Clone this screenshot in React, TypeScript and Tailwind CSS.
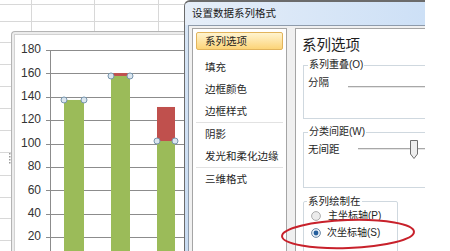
import React from 'react'

// y position (page px) of a value on the chart's axis
const yOf = (v: number) => 260.6 - v * 1.17

const ticks = [180, 160, 140, 120, 100, 80, 60, 40, 20]

const bars = [
  { x: 64, w: 20, green: 137.3, red: 0 },
  { x: 111, w: 19, green: 157.8, red: 160.3 },
  { x: 157, w: 18, green: 102.2, red: 131.3 },
]

const sheetRows = [4, 21, 42, 64, 86, 108, 130, 152, 175, 197, 218, 240]
const sheetCols = [31, 94, 158]

function Chart() {
  return (
    <svg width="169" height="216" viewBox="15 35 169 216" className="block">
      {ticks.map((t) => (
        <g key={t}>
          <line x1="46" x2="184" y1={Math.round(yOf(t)) + 0.5} y2={Math.round(yOf(t)) + 0.5} stroke="#8c8c8c" />
          <text
            x="41"
            y={yOf(t)}
            textAnchor="end"
            dominantBaseline="middle"
            fontSize="12"
            fill="#333"
            fontFamily="Liberation Sans, sans-serif"
          >
            {t}
          </text>
        </g>
      ))}
      <line x1="50.5" x2="50.5" y1="50" y2="251" stroke="#8c8c8c" />
      {bars.map((b) => (
        <g key={b.x}>
          <rect x={b.x} y={yOf(b.green)} width={b.w} height={260 - yOf(b.green)} fill="#9bbb59" />
          {b.red > 0 && (
            <rect x={b.x} y={yOf(b.red)} width={b.w} height={yOf(b.green) - yOf(b.red)} fill="#c0504d" />
          )}
        </g>
      ))}
      {bars.map((b) => (
        <g key={'h' + b.x}>
          <circle cx={b.x} cy={yOf(b.green)} r="3" fill="#dbe6ef" stroke="#7896ae" />
          <circle cx={b.x + b.w} cy={yOf(b.green)} r="3" fill="#dbe6ef" stroke="#7896ae" />
        </g>
      ))}
    </svg>
  )
}

function Sheet() {
  return (
    <div className="relative w-[184px] shrink-0">
      <svg className="absolute inset-0" width="184" height="251">
        {sheetRows.map((y) => (
          <line key={y} x1="0" x2="184" y1={y + 0.5} y2={y + 0.5} stroke="#d8d8d8" />
        ))}
        {sheetCols.map((x) => (
          <line key={x} x1={x + 0.5} x2={x + 0.5} y1="0" y2="32" stroke="#d8d8d8" />
        ))}
        {[153, 156, 159, 162].map((y) => (
          <rect key={y} x="9" y={y} width="1.5" height="1.5" fill="#9a9a9a" />
        ))}
      </svg>
      <div className="relative pl-[11px] pt-[31px]">
        <div className="rounded-tl-[4px] border-l border-t border-[#b4b4b4] bg-[#ececec] pl-[2px] pt-[2px]">
          <div className="border-l border-t border-[#d2d2d2] bg-white">
            <Chart />
          </div>
        </div>
      </div>
    </div>
  )
}

function Radio({ on }: { on?: boolean }) {
  return (
    <svg width="10" height="10" viewBox="0 0 10 10" className="shrink-0">
      <circle cx="5" cy="5" r="4.4" fill={on ? '#e6eef6' : '#ececec'} stroke={on ? '#5d7d9c' : '#a4a4a4'} strokeWidth="0.9" />
      {on && <circle cx="5" cy="5" r="2.4" fill="#245f9e" />}
    </svg>
  )
}

function Thumb() {
  return (
    <svg width="8" height="19" viewBox="0 0 8 19" className="shrink-0">
      <path d="M0.5 0.5 H7.5 V14 L4 18.5 L0.5 14 Z" fill="#eeeeee" stroke="#6f6f6f" />
    </svg>
  )
}

const navItems = ['填充', '边框颜色', '边框样式']

function Dialog() {
  return (
    <div className="flex h-[251px] w-[241px] shrink-0 flex-col overflow-hidden rounded-tl-[6px] border-l border-t-2 border-[#6b6b6b] bg-gradient-to-b from-[#d8e6f6] to-[#c9dcf2]">
      <div className="flex h-[23px] shrink-0 items-center bg-gradient-to-r from-[#e6eef8] to-[#cde0f6] pl-[7px] text-[10.5px] leading-none text-[#1a1a1a]">
        设置数据系列格式
      </div>
      <div className="flex min-h-0 flex-1 pl-[3px]">
        <div className="flex flex-1 gap-[8px] border-l border-t border-[#8e9bab] bg-[#f0f0f0] pl-[3px] pt-[2px]">
          {/* left list */}
          <div className="h-[240px] w-[95px] shrink-0 border border-[#a5a5a5] bg-white px-[3px] pt-[3px] text-[10.5px] leading-none">
            <div className="flex h-[18px] items-center rounded-[2px] border border-[#e2b45c] bg-gradient-to-b from-[#fff4cf] to-[#fcd477] pl-[8px]">
              系列选项
            </div>
            <div className="mt-[6px]">
              {navItems.map((n) => (
                <div key={n} className="flex h-[22px] items-center pl-[9px]">
                  {n}
                </div>
              ))}
            </div>
            <div className="h-px bg-[#e2e2e2]" />
            <div className="flex h-[22px] items-center pl-[9px]">阴影</div>
            <div className="flex h-[22px] items-center pl-[9px]">发光和柔化边缘</div>
            <div className="h-px bg-[#e2e2e2]" />
            <div className="flex h-[22px] items-center pl-[9px]">三维格式</div>
          </div>

          {/* right panel */}
          <div className="h-[240px] min-w-0 flex-1 border-l border-t border-[#a5a5a5] bg-white pt-[8px] text-[10px] leading-none">
            <div className="pl-[6px] text-[14.5px] leading-[16px]">系列选项</div>

            <fieldset className="ml-[7px] mt-[6px] h-[60px] border-b border-l border-t border-[#cfd8df] pl-[4px]">
              <legend className="px-[1px] leading-[12px]">系列重叠(O)</legend>
              <div className="mt-[4px] flex h-[14px] items-center">
                <div className="w-[40px] shrink-0 text-[10.5px]">分隔</div>
                <div className="mb-[1px] h-[2px] flex-1 self-end border-t border-[#a8a8a8] bg-[#e6e6e6]" />
              </div>
            </fieldset>

            <fieldset className="ml-[7px] mt-[7px] h-[62px] border-b border-l border-t border-[#cfd8df] pl-[4px]">
              <legend className="px-[1px] leading-[12px]">分类间距(W)</legend>
              <div className="mt-[1px] flex h-[20px] items-center">
                <div className="w-[50px] shrink-0 text-[10.5px]">无间距</div>
                <div className="h-[2px] w-[52px] shrink-0 border-t border-[#a8a8a8] bg-[#e6e6e6]" />
                <Thumb />
                <div className="h-[2px] flex-1 border-t border-[#a8a8a8] bg-[#e6e6e6]" />
              </div>
            </fieldset>

            <fieldset className="ml-[7px] mt-[7px] h-[70px] w-[95px] rounded-[2px] border border-[#cfd8df] pl-[3px]">
              <legend className="px-[1px] text-[10.5px] leading-[12px]">系列绘制在</legend>
              <div className="ml-[4px] mt-[2px] flex h-[14px] items-center gap-[7px]">
                <Radio />
                <span>主坐标轴(P)</span>
              </div>
              <div className="ml-[4px] mt-[3px] flex h-[14px] items-center gap-[6px]">
                <Radio on />
                <span>次坐标轴(S)</span>
              </div>
            </fieldset>
          </div>
        </div>
      </div>
    </div>
  )
}

export default function App() {
  return (
    <div className="relative flex h-[251px] w-[450px] overflow-hidden bg-white font-['Liberation_Sans','Noto_Sans_CJK_SC',sans-serif] text-[#1e1e1e]">
      <Sheet />
      <Dialog />
      <div className="flex-1 bg-white" />
      {/* hand-drawn red annotation ring */}
      <svg className="pointer-events-none absolute left-[278px] top-[214px]" width="146" height="40" viewBox="0 0 146 40">
        <ellipse cx="70" cy="20" rx="66" ry="14" fill="none" stroke="#c8212b" strokeWidth="2" transform="rotate(-2 70 20)" />
      </svg>
    </div>
  )
}
